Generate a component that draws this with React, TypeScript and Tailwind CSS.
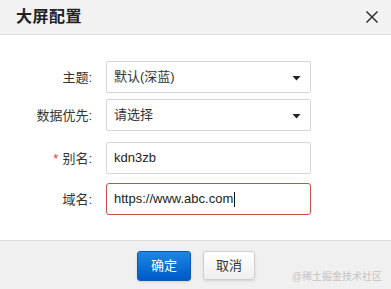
import React from "react";

const font = { fontFamily: '"Liberation Sans", Arial, "Noto Sans CJK SC", sans-serif' };

function Caret() {
  return (
    <svg width="9" height="5" viewBox="0 0 9 5" className="absolute right-[9px] top-[14px]">
      <path d="M0.5 0 H8.5 L4.5 4.5 Z" fill="#222" />
    </svg>
  );
}

function Row({
  label,
  required,
  children,
  className,
}: {
  label: string;
  required?: boolean;
  children: React.ReactNode;
  className?: string;
}) {
  return (
    <div className={"flex items-center " + (className ?? "")}>
      <div className="w-[92px] text-right text-[13px] text-[#333] leading-none pr-0">
        {required && <span className="text-[#e4393c] mr-[4px]">*</span>}
        {label}
      </div>
      <div className="ml-[14px] w-[205px]">{children}</div>
    </div>
  );
}

export default function App() {
  return (
    <div className="w-[391px] h-[289px] bg-white flex flex-col overflow-hidden" style={font}>
      <div className="h-[35px] bg-[#f2f2f2] border-b border-[#dcdcdc] flex items-center justify-between pl-[16px] pr-[10px]">
        <span className="text-[16px] font-bold text-[#222] tracking-[0.5px]">大屏配置</span>
        <svg width="14" height="14" viewBox="0 0 14 14" className="mr-[2px]">
          <path d="M1.5 1.5 L12.5 12.5 M12.5 1.5 L1.5 12.5" stroke="#333" strokeWidth="1.5" />
        </svg>
      </div>
      <div className="flex-1 flex flex-col pt-[26px]">
        <Row label="主题:">
          <div className="relative h-[32px] border border-[#d6d6d6] rounded-[2px] flex items-center pl-[7px] text-[13px] text-[#333]">
            默认(深蓝)
            <Caret />
          </div>
        </Row>
        <Row label="数据优先:" className="mt-[6px]">
          <div className="relative h-[32px] border border-[#d6d6d6] rounded-[2px] flex items-center pl-[7px] text-[13px] text-[#333]">
            请选择
            <Caret />
          </div>
        </Row>
        <Row label="别名:" required className="mt-[11px]">
          <div className="h-[32px] border border-[#d6d6d6] rounded-[2px] flex items-center pl-[7px] text-[13px] text-[#222]">
            kdn3zb
          </div>
        </Row>
        <Row label="域名:" className="mt-[9px]">
          <div className="h-[32px] border border-[#c8513c] rounded-[3px] flex items-center pl-[7px] text-[13px] text-[#222]">
            https://www.abc.com
            <span className="inline-block w-px h-[15px] bg-[#111] ml-[1px]" />
          </div>
        </Row>
      </div>
      <div className="h-[49px] bg-[#f0f0f0] border-t border-[#dcdcdc] relative flex items-start pl-[137px] pt-[10px] gap-[12px]">
        <button className="w-[54px] h-[30px] rounded-[3px] border border-[#0a5bb5] bg-gradient-to-b from-[#1f86e2] to-[#0059c9] text-white text-[13px] flex items-center justify-center shadow-sm">
          确定
        </button>
        <button className="w-[52px] h-[29px] rounded-[3px] border border-[#d0d0d0] bg-gradient-to-b from-[#ffffff] to-[#efefef] text-[#333] text-[13px] flex items-center justify-center shadow-sm">
          取消
        </button>
        <span className="absolute right-[9px] bottom-[5px] text-[10px] text-[#c4c4c4]">@稀土掘金技术社区</span>
      </div>
    </div>
  );
}
